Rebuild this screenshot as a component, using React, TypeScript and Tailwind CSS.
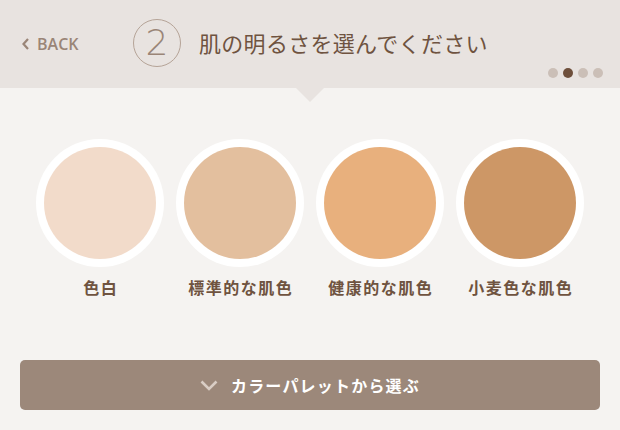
import React from "react";

const tones = [
  { name: "色白", color: "#f2dbca" },
  { name: "標準的な肌色", color: "#e3bf9e" },
  { name: "健康的な肌色", color: "#e8b07d" },
  { name: "小麦色な肌色", color: "#cd9766" },
];

export default function App() {
  return (
    <div className="w-[620px] h-[430px] bg-[#f5f3f1] flex flex-col overflow-hidden" style={{ fontFamily: '"Noto Sans CJK JP", "Noto Sans", sans-serif' }}>
      {/* header */}
      <div className="relative h-[88px] bg-[#e8e3e0] shrink-0">
        <div className="flex items-center h-[88px] pl-[22px]">
          <button className="flex items-center gap-[8px] text-[#9a8577] text-[16px] font-semibold w-[111px] mt-[-1px]" style={{ fontFamily: '"Open Sans", sans-serif' }}>
            <svg width="7" height="12" viewBox="0 0 7 12"><path d="M6 1 L1.5 6 L6 11" fill="none" stroke="#9a8577" strokeWidth="2.2" /></svg>
            BACK
          </button>
          <div className="w-[48px] h-[48px] rounded-full border border-[#b5a397] flex items-center justify-center text-[#9a8577] text-[36px] leading-none mt-[-2px]" style={{ fontFamily: '"DejaVu Sans", sans-serif', fontWeight: 200 }}>
            <span className="mt-[-1px]">2</span>
          </div>
          <h1 className="ml-[18px] text-[22px] text-[#6f5340] tracking-[0.3px] mt-[-4px]">肌の明るさを選んでください</h1>
        </div>
        <div className="absolute right-[17px] top-[68px] flex gap-[5px]">
          <span className="w-[10px] h-[10px] rounded-full bg-[#cbbfb7]" />
          <span className="w-[10px] h-[10px] rounded-full bg-[#6e4f3b]" />
          <span className="w-[10px] h-[10px] rounded-full bg-[#cbbfb7]" />
          <span className="w-[10px] h-[10px] rounded-full bg-[#cbbfb7]" />
        </div>
        <div className="absolute left-[295px] top-[87px] w-0 h-0 border-l-[15px] border-r-[15px] border-t-[15px] border-l-transparent border-r-transparent border-t-[#e8e3e0]" />
      </div>

      {/* tones */}
      <div className="flex pl-[36px] gap-[12px] pt-[51px]">
        {tones.map((t) => (
          <div key={t.name} className="flex flex-col items-center w-[128px]">
            <div className="w-[128px] h-[128px] rounded-full bg-white flex items-center justify-center">
              <div className="w-[112px] h-[112px] rounded-full" style={{ backgroundColor: t.color }} />
            </div>
            <div className="mt-[8px] text-[16px] font-bold text-[#6f5340] tracking-[1.5px] pl-[1.5px]">{t.name}</div>
          </div>
        ))}
      </div>

      {/* palette button */}
      <div className="px-[20px] mt-[61px]">
        <button className="w-full h-[50px] rounded-[5px] bg-[#9c887a] flex items-center justify-center gap-[13px] text-white text-[16px] font-bold">
          <svg width="18" height="11" viewBox="0 0 18 11"><path d="M1.5 1.5 L9 9 L16.5 1.5" fill="none" stroke="#d9cdc5" strokeWidth="2.6" /></svg>
          <span className="tracking-[1.2px]">カラーパレットから選ぶ</span>
        </button>
      </div>
    </div>
  );
}
